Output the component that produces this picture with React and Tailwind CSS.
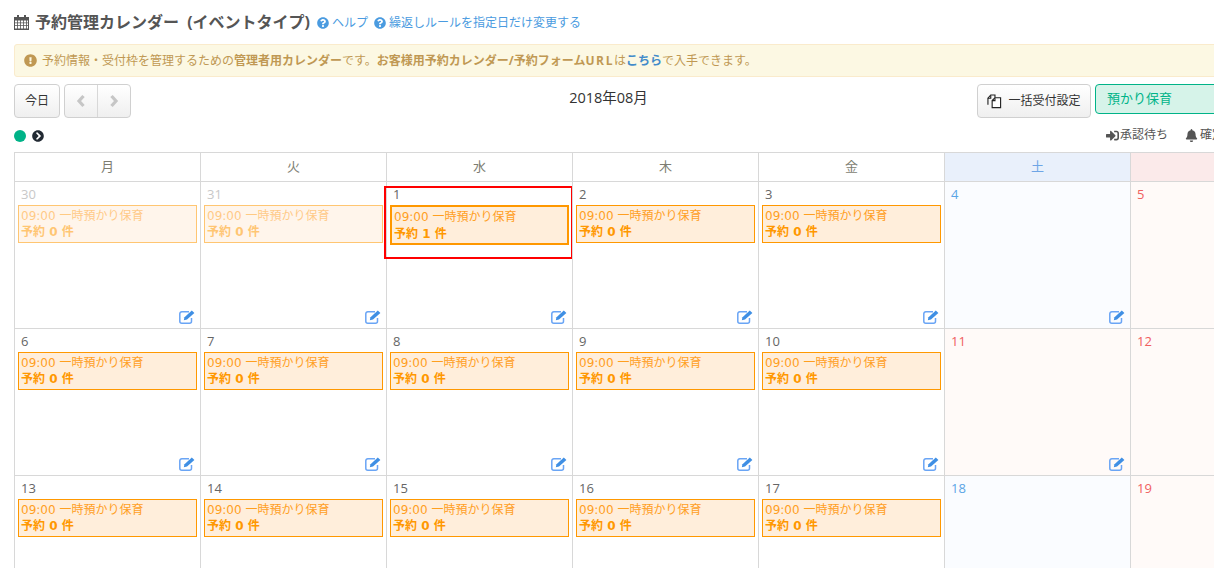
import React from "react";
import { FaQuestionCircle, FaExclamationCircle, FaChevronCircleRight, FaSignInAlt, FaBell } from "react-icons/fa";

const font = { fontFamily: '"Open Sans","Noto Sans CJK JP",sans-serif' };
const eventFont = { fontFamily: '"DejaVu Sans","Noto Sans CJK JP",sans-serif' };

function CalendarIcon() {
  return (
    <svg viewBox="0 0 15 15" className="w-[15px] h-[15px] mr-[7px] shrink-0">
      <path d="M0 2h15v13H0z" fill="#555555" />
      <path d="M3 0h2v3H3zM10 0h2v3h-2z" fill="#555555" />
      <g fill="#ffffff">
        <path d="M1 5.500h2.200v2H1zM4 5.500h2.200v2H4zM7 5.500h2.200v2H7zM10 5.500h2v2h-2zM12.800 5.500h1.200v2h-1.200z" />
        <path d="M1 8.300h2.200v2H1zM4 8.300h2.200v2H4zM7 8.300h2.200v2H7zM10 8.300h2v2h-2zM12.800 8.300h1.200v2h-1.200z" />
        <path d="M1 11.100h2.200v2.400H1zM4 11.100h2.200v2.400H4zM7 11.100h2.200v2.400H7zM10 11.100h2v2.400h-2zM12.800 11.100h1.200v2.400h-1.200z" />
      </g>
    </svg>
  );
}

function EditIcon() {
  return (
    <svg viewBox="0 0 17 14" className="absolute right-[4px] bottom-[4px] w-[17px] h-[14px]">
      <path d="M12.500 8v3.200a2 2 0 0 1-2 2H2.800a2 2 0 0 1-2-2V3.800a2 2 0 0 1 2-2H10" fill="none" stroke="#6aa5f5" strokeWidth="1.500" />
      <path d="M4.800 10.200l0.700-3L12.800 0.500l2.600 2.600L8 9.600z" fill="#3f8fe4" />
    </svg>
  );
}

function Chevron({ dir }) {
  return (
    <svg viewBox="0 0 10 14" className="w-[10px] h-[14px]">
      <path d={dir === "left" ? "M7.500 2L3 7l4.500 5" : "M2.500 2L7 7l-4.500 5"} fill="none" stroke="#c6c6c6" strokeWidth="3.200" />
    </svg>
  );
}

function Event({ count, faded, strong }) {
  return (
    <div
      className={`mx-[3px] text-[12px] text-[#ff9f1f] ${
        strong
          ? "h-[40px] border-2 border-[#ff9800] bg-[#ffeedb] pl-[2px] pt-[2px] leading-[17px]"
          : "h-[38px] border border-[#ff9800] bg-[#ffeedb] px-[2px] pt-[2px] leading-[16px]"
      } ${faded ? "opacity-55" : ""}`}
      style={eventFont}
    >
      <div className="whitespace-nowrap">09:00 一時預かり保育</div>
      <div className="font-bold whitespace-nowrap text-[#ff9800]">予約 {count} 件</div>
    </div>
  );
}

function Cell({ day, kind, event, count = 0, faded, strong, edit = true, highlight }) {
  const bg = kind === "sat" ? "bg-[#fafcff]" : kind === "sun" ? "bg-[#fffaf8]" : "bg-white";
  const num = faded ? "text-[#c8c8c8]" : kind === "sat" ? "text-[#5aa5e6]" : kind === "sun" ? "text-[#f0605f]" : "text-[#666666]";
  return (
    <div className={`relative h-[147px] border-l border-b border-[#d8d8d8] ${bg}`}>
      <div className={`pl-[6px] pt-[4px] h-[23px] text-[13px] leading-[16px] ${num}`}>{day}</div>
      {event && <Event count={count} faded={faded} strong={strong} />}
      {edit && <EditIcon />}
      {highlight && <div className="absolute -left-[3px] top-[4px] w-[189px] h-[73px] border-2 border-[#ff0000]" />}
    </div>
  );
}

const headers = [
  ["月", "bg-white text-[#7d7d72]"],
  ["火", "bg-white text-[#7d7d72]"],
  ["水", "bg-white text-[#7d7d72]"],
  ["木", "bg-white text-[#7d7d72]"],
  ["金", "bg-white text-[#7d7d72]"],
  ["土", "bg-[#e9f0fb] text-[#6ea5e6]"],
  ["日", "bg-[#fbeaea] text-[#ee6b6b]"],
];

const rows = [
  [
    { day: 30, event: true, faded: true },
    { day: 31, event: true, faded: true },
    { day: 1, event: true, count: 1, strong: true, highlight: true },
    { day: 2, event: true },
    { day: 3, event: true },
    { day: 4, kind: "sat" },
    { day: 5, kind: "sun" },
  ],
  [
    { day: 6, event: true },
    { day: 7, event: true },
    { day: 8, event: true },
    { day: 9, event: true },
    { day: 10, event: true },
    { day: 11, kind: "sun" },
    { day: 12, kind: "sun" },
  ],
  [
    { day: 13, event: true },
    { day: 14, event: true },
    { day: 15, event: true },
    { day: 16, event: true },
    { day: 17, event: true },
    { day: 18, kind: "sat", edit: false },
    { day: 19, kind: "sun", edit: false },
  ],
];

export default function App() {
  return (
    <div className="w-[1214px] h-[568px] overflow-hidden bg-white" style={font}>
      <div className="w-[1320px] pl-[14px]">
        <div className="h-[44px] flex items-center w-[1200px]">
          <CalendarIcon />
          <span className="-ml-[1px] text-[16px] font-bold text-[#555555] whitespace-nowrap [word-spacing:4px]">予約管理カレンダー (イベントタイプ)</span>
          <FaQuestionCircle className="ml-[7px] mt-[2px] text-[#4a9be0] text-[12px]" />
          <span className="ml-[3px] mt-[2px] text-[12px] text-[#4a9be0]">ヘルプ</span>
          <FaQuestionCircle className="ml-[6px] mt-[2px] text-[#4a9be0] text-[12px]" />
          <span className="ml-[3px] mt-[2px] text-[12px] text-[#4a9be0]">繰返しルールを指定日だけ変更する</span>
        </div>
        <div className="h-[33px] w-[1300px] flex items-center rounded-l-[3px] border border-[#faebcc] bg-[#fcf8e3] pl-[9px] text-[12px] text-[#c09853]">
          <FaExclamationCircle className="text-[#c09853] text-[13px] mr-[5px]" />
          <span className="whitespace-nowrap">
            予約情報・受付枠を管理するための<b>管理者用カレンダー</b>です。<b>お客様用予約カレンダー/予約フォーム<span className="tracking-[1.6px]">URL</span></b>は<b className="text-[#428bca]">こちら</b>で入手できます。
          </span>
        </div>
        <div className="relative mt-[7px] h-[34px] flex">
          <button className="w-[46px] h-[34px] rounded-[4px] border border-[#d0d0d0] bg-gradient-to-b from-white to-[#efefef] text-[12px] text-[#333333]">今日</button>
          <div className="ml-[4px] w-[67px] h-[34px] flex rounded-[4px] border border-[#d0d0d0] bg-gradient-to-b from-white to-[#efefef]">
            <div className="flex-1 flex items-center justify-center border-r border-[#d8d8d8]"><Chevron dir="left" /></div>
            <div className="flex-1 flex items-center justify-center"><Chevron dir="right" /></div>
          </div>
          <div className="absolute left-[0px] top-[3px] w-[1189px] text-center text-[14.5px] text-[#333333]">2018年08月</div>
          <button className="absolute left-[963px] top-0 w-[114px] h-[34px] flex items-center justify-center rounded-[4px] border border-[#d0d0d0] bg-gradient-to-b from-white to-[#efefef] text-[12px] text-[#333333]">
            <svg viewBox="0 0 16 16" className="w-[15px] h-[15px] mr-[6px]" fill="none" stroke="#222222" strokeWidth="1.200">
              <path d="M1 11.500V4.500L4 1H8.500V4" />
              <path d="M5.500 14.500V7L8.500 4H14.500V14.500Z" fill="#ffffff" />
              <path d="M4 1.500V4.500H1" />
              <path d="M8.500 4.500V7H5.500" />
            </svg>
            一括受付設定
          </button>
          <div className="absolute left-[1081px] top-0 w-[200px] h-[30px] flex items-center rounded-[4px] border border-[#00b388] bg-[#d6f3e9] pl-[11px] text-[13px] text-[#00b388]">預かり保育</div>
        </div>
        <div className="relative h-[34px]">
          <div className="absolute left-0 top-[12px] flex items-center gap-[6px]">
            <span className="w-[12px] h-[12px] rounded-full bg-[#00b388]" />
            <FaChevronCircleRight className="text-[#222a33] text-[12px]" />
          </div>
          <div className="absolute left-[1092px] top-[8px] flex items-center text-[12px] text-[#555555] whitespace-nowrap">
            <FaSignInAlt className="text-[13px] mr-[1px]" />
            <span>承認待ち</span>
            <FaBell className="ml-[17px] text-[13px] mr-[2px]" />
            <span>確定</span>
          </div>
        </div>
        <div className="w-[1302px] border-t border-[#d8d8d8]">
          <div className="grid grid-cols-[repeat(7,186px)] h-[29px]">
            {headers.map(([t, c]) => (
              <div key={t} className={`flex items-center justify-center border-l border-b border-[#d8d8d8] text-[13px] ${c}`}>{t}</div>
            ))}
          </div>
          {rows.map((r, i) => (
            <div key={i} className="grid grid-cols-[repeat(7,186px)]">
              {r.map((c) => (
                <Cell key={c.day} {...c} />
              ))}
            </div>
          ))}
        </div>
      </div>
    </div>
  );
}
